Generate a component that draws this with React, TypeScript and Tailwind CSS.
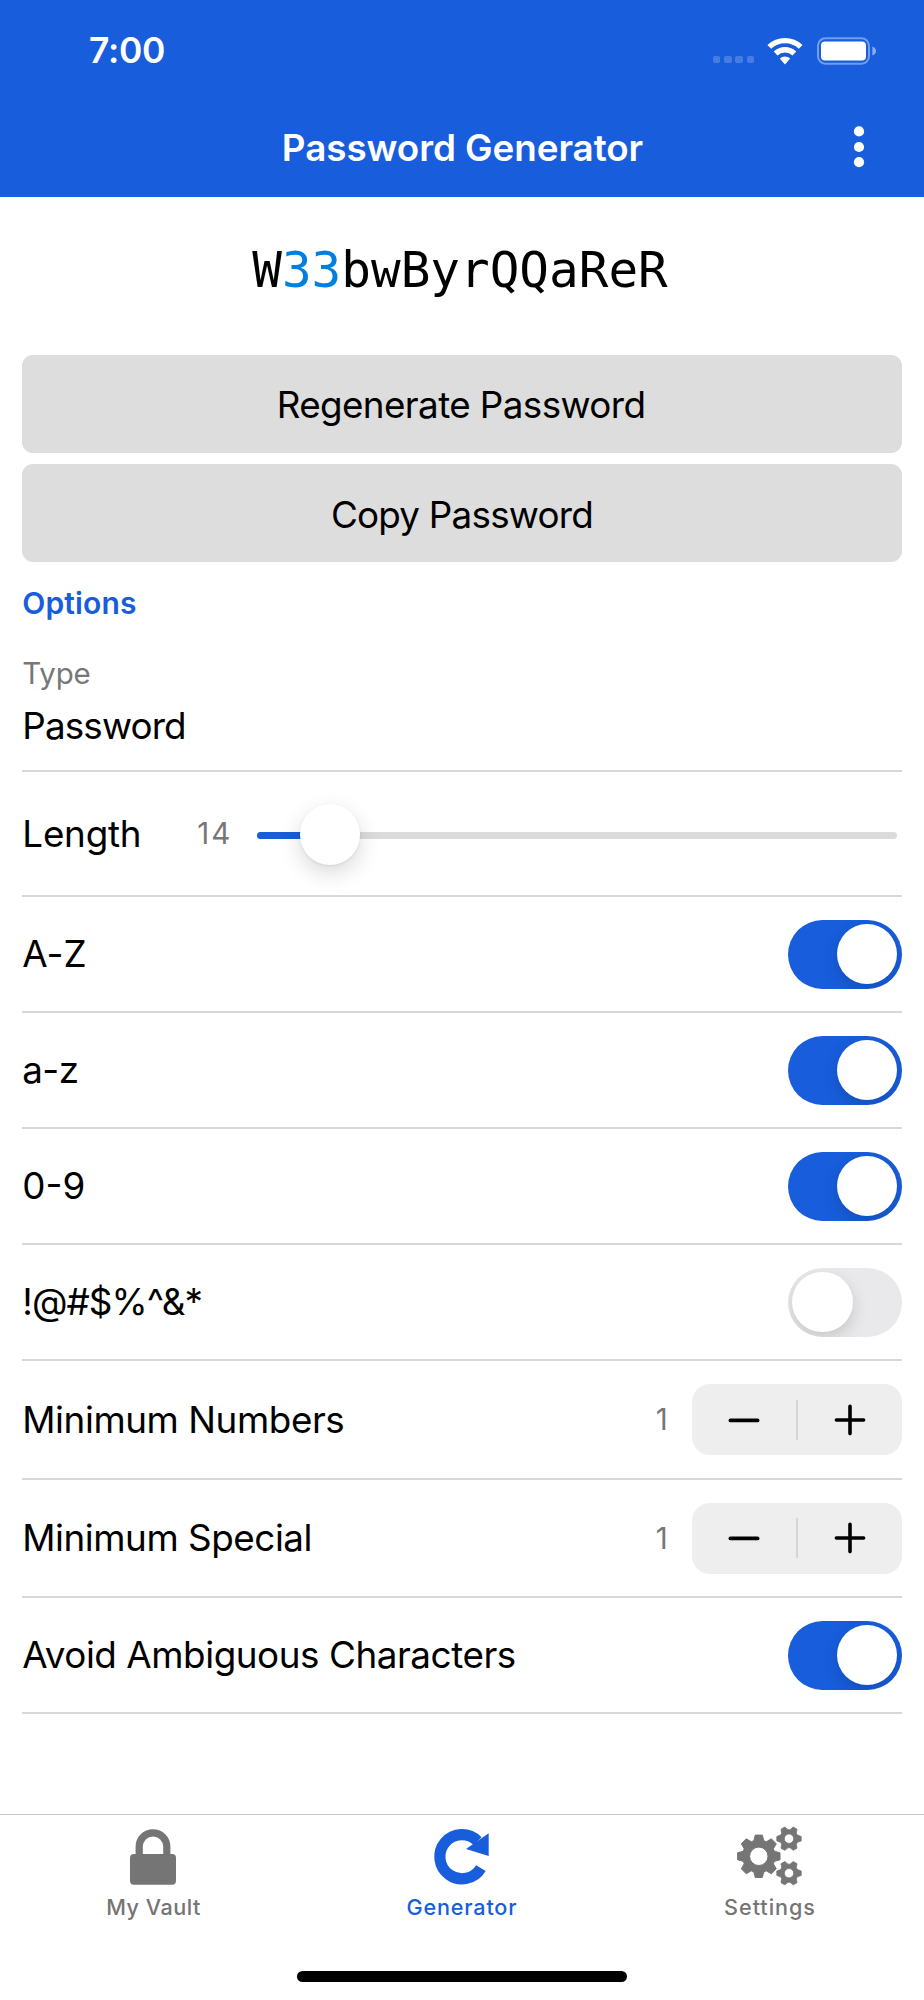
import { useState } from 'react';
import clsx from 'clsx';

const MIN_LENGTH = 5;
const MAX_LENGTH = 128;

type Tab = 'vault' | 'generator' | 'settings';

export default function App() {
  const [password] = useState('W33bwByrQQaReR');
  const [length] = useState(14);
  const [upper, setUpper] = useState(true);
  const [lower, setLower] = useState(true);
  const [digits, setDigits] = useState(true);
  const [special, setSpecial] = useState(false);
  const [minNumbers, setMinNumbers] = useState(1);
  const [minSpecial, setMinSpecial] = useState(1);
  const [avoidAmbiguous, setAvoidAmbiguous] = useState(true);
  const [tab, setTab] = useState<Tab>('generator');

  return (
    <div className="flex h-[2000px] w-[924px] flex-col overflow-hidden bg-white font-['Inter','Liberation_Sans',sans-serif] text-black">
      <header className="h-[197px] shrink-0 bg-[#175DDC] text-white">
        <StatusBar />
        <div className="grid h-24 grid-cols-[1fr_auto_1fr] items-center pb-[3px]">
          <span />
          <h1 className="pl-px text-[36.8px] font-[570] tracking-[-0.06px]">Password Generator</h1>
          <button aria-label="More options" className="mr-[55px] mb-px justify-self-end">
            <svg width="20" height="44" viewBox="0 0 20 44" fill="currentColor" className="block">
              <circle cx="10" cy="6.4" r="5.1" />
              <circle cx="10" cy="22" r="5.1" />
              <circle cx="10" cy="37.2" r="5.1" />
            </svg>
          </button>
        </div>
      </header>

      <main className="flex-1 px-[22.3px]">
        <PasswordText value={password} />

        <div className="flex flex-col gap-[11px]">
          <ActionButton label="Regenerate Password" className="pt-[2px] pr-[2px] tracking-[-0.6px]" />
          <ActionButton label="Copy Password" className="pt-[3px] tracking-[-0.76px]" />
        </div>

        <h2 className="h-[81px] text-[30px] leading-[82px] font-[580] tracking-[0.15px] text-[#175DDC]">Options</h2>

        <div className="h-[129px] border-b-2 border-[#d8d8d8] pt-[12px]">
          <div className="text-[29.5px] leading-[37px] tracking-[-0.2px] text-[#777777]">Type</div>
          <div className="mt-[12px] text-[36.8px] leading-[44px] tracking-[-0.85px]">Password</div>
        </div>

        <div className="flex h-[125px] items-center border-b-2 border-[#d8d8d8]">
          <span className="w-[175px] text-[36.8px] tracking-[-0.22px]">Length</span>
          <span className="w-[60px] text-[29.5px] tracking-[2px] text-[#777777]">{length}</span>
          <LengthSlider value={length} />
        </div>

        <OptionRow label="A-Z" className="tracking-[0.1px]">
          <Toggle on={upper} onChange={setUpper} />
        </OptionRow>
        <OptionRow label="a-z" className="tracking-[-0.6px]">
          <Toggle on={lower} onChange={setLower} />
        </OptionRow>
        <OptionRow label="0-9" className="tracking-normal">
          <Toggle on={digits} onChange={setDigits} />
        </OptionRow>
        <OptionRow label="!@#$%^&*" className="tracking-[-0.95px]">
          <Toggle on={special} onChange={setSpecial} />
        </OptionRow>
        <OptionRow label="Minimum Numbers" className="tracking-[-0.42px]" height="h-[119px]">
          <Stepper value={minNumbers} onChange={setMinNumbers} />
        </OptionRow>
        <OptionRow label="Minimum Special" className="tracking-[-0.45px]" height="h-[118px]">
          <Stepper value={minSpecial} onChange={setMinSpecial} />
        </OptionRow>
        <OptionRow label="Avoid Ambiguous Characters" className="tracking-[-0.44px]">
          <Toggle on={avoidAmbiguous} onChange={setAvoidAmbiguous} />
        </OptionRow>
      </main>

      <footer className="h-[186px] shrink-0 border-t border-[#c6c6c6]">
        <nav className="grid h-[156px] grid-cols-3 items-start pt-[7px]">
          <TabButton label="My Vault" className="mr-px tracking-[0.5px]" active={tab === 'vault'} onClick={() => setTab('vault')}>
            <LockIcon />
          </TabButton>
          <TabButton label="Generator" className="tracking-[0.8px]" active={tab === 'generator'} onClick={() => setTab('generator')}>
            <RefreshIcon />
          </TabButton>
          <TabButton label="Settings" className="tracking-[0.95px]" active={tab === 'settings'} onClick={() => setTab('settings')}>
            <CogsIcon />
          </TabButton>
        </nav>
        <div className="mx-auto h-[11px] w-[330px] rounded-full bg-black" />
      </footer>
    </div>
  );
}

function StatusBar() {
  return (
    <div className="flex h-[101px] items-center pr-[48px] pl-[89px]">
      <span className="text-[35.4px] font-[580] tracking-[-0.28px]">7:00</span>
      <div className="ml-auto flex items-center">
        <div className="mt-[18px] flex gap-[3.8px]">
          {[0, 1, 2, 3].map((i) => (
            <span key={i} className="size-[7.4px] rounded-[2px] bg-white/20" />
          ))}
        </div>
        <svg width="36" height="28" viewBox="0 0 36 28" fill="none" stroke="currentColor" strokeWidth="5.4" className="ml-[13px]">
          <path d="M2.3 9.9A22.8 22.8 0 0 1 33.7 9.9" />
          <path d="M8.6 16.5A13.6 13.6 0 0 1 27.4 16.5" />
          <path d="M18 27.4 12.8 21.6A7.6 7.6 0 0 1 23.2 21.6Z" fill="currentColor" stroke="none" />
        </svg>
        <svg width="59" height="28" viewBox="0 0 59 28" fill="none" className="ml-[14px]">
          <rect x="1" y="1.3" width="51" height="25.4" rx="7.4" stroke="currentColor" strokeOpacity="0.4" strokeWidth="2" />
          <rect x="4" y="4.6" width="45" height="19" rx="4" fill="currentColor" />
          <path d="M55.4 9.4C57.6 10.2 59 12 59 14C59 16 57.6 17.8 55.4 18.6Z" fill="currentColor" fillOpacity="0.5" />
        </svg>
      </div>
    </div>
  );
}

function PasswordText({ value }: { value: string }) {
  return (
    <div className="flex h-[158px] items-center justify-center pr-1 pb-[10px] font-['DejaVu_Sans_Mono','Liberation_Mono',monospace] text-[49.3px]">
      {value.split(/(\d+)/).map((part, i) => (
        <span key={i} className={clsx(/\d/.test(part) && 'text-[#007FDE]')}>
          {part}
        </span>
      ))}
    </div>
  );
}

function ActionButton({ label, className }: { label: string; className?: string }) {
  return <button className={clsx('h-[98px] w-full rounded-[11px] bg-[#dddddd] text-[36.8px]', className)}>{label}</button>;
}

function LengthSlider({ value }: { value: number }) {
  // keep the thumb inside of the track on both ends
  const ratio = (value - MIN_LENGTH) / (MAX_LENGTH - MIN_LENGTH);
  const left = ratio * (639 - 60);

  return (
    <div className="relative mt-[4px] mr-[4.5px] h-[7px] flex-1 rounded-full bg-[#dbdbdb]">
      <div className="h-full rounded-full bg-[#175DDC]" style={{ width: left + 30 }} />
      <div
        className="absolute -top-[28px] size-[60.5px] rounded-full bg-white shadow-[0_8px_22px_rgba(0,0,0,0.15),0_1px_3px_rgba(0,0,0,0.08)]"
        style={{ left }}
      />
    </div>
  );
}

interface OptionRowProps {
  label: string;
  className?: string;
  height?: string;
  children: React.ReactNode;
}

function OptionRow({ label, className, height = 'h-[116px]', children }: OptionRowProps) {
  return (
    <div className={clsx('flex items-center justify-between border-b-2 border-[#d8d8d8]', height)}>
      <span className={clsx('text-[36.8px]', className)}>{label}</span>
      {children}
    </div>
  );
}

function Toggle({ on, onChange }: { on: boolean; onChange: (on: boolean) => void }) {
  return (
    <button
      role="switch"
      aria-checked={on}
      onClick={() => onChange(!on)}
      className={clsx(
        'flex h-[69px] w-[114px] items-center overflow-hidden rounded-full px-[4.4px]',
        on ? 'justify-end bg-[#175DDC]' : 'justify-start bg-[#e9e9eb]',
      )}
    >
      <span className="size-[60.5px] rounded-full bg-white shadow-[0_6px_16px_rgba(0,0,0,0.15)]" />
    </button>
  );
}

function Stepper({ value, onChange }: { value: number; onChange: (value: number) => void }) {
  return (
    <div className="flex items-center">
      <span className="mr-6 text-[29.5px] text-[#777777]">{value}</span>
      <div className="flex h-[71px] w-[210px] items-center rounded-[18px] bg-[#eeeeee]">
        <button aria-label="Decrease" className="flex flex-1 justify-center" onClick={() => onChange(Math.max(0, value - 1))}>
          <svg width="32" height="32" viewBox="0 0 32 32" stroke="currentColor" strokeWidth="3.7" strokeLinecap="round">
            <path d="M2.4 16.4H29.6" />
          </svg>
        </button>
        <div className="h-10 w-[2px] bg-[#d5d5d6]" />
        <button aria-label="Increase" className="flex flex-1 justify-center" onClick={() => onChange(value + 1)}>
          <svg width="32" height="32" viewBox="0 0 32 32" stroke="currentColor" strokeWidth="3.6" strokeLinecap="round">
            <path d="M2.4 16H29.6M16 2.4V29.6" />
          </svg>
        </button>
      </div>
    </div>
  );
}

interface TabButtonProps {
  label: string;
  className?: string;
  active: boolean;
  onClick: () => void;
  children: React.ReactNode;
}

function TabButton({ label, className, active, onClick, children }: TabButtonProps) {
  return (
    <button onClick={onClick} className={clsx('flex flex-col items-center', active ? 'text-[#175DDC]' : 'text-[#757575]')}>
      {children}
      <span className={clsx('text-[21.6px] leading-[34px] font-[460]', className)}>{label}</span>
    </button>
  );
}

function LockIcon() {
  return (
    <svg width="80" height="68" viewBox="0 0 80 68" fill="none">
      <path d="M25.2 34V24.6A13.8 13.8 0 0 1 52.8 24.6V34" stroke="currentColor" strokeWidth="7.2" />
      <rect x="16" y="32" width="46" height="30.7" rx="4" fill="currentColor" />
    </svg>
  );
}

function RefreshIcon() {
  return (
    <svg width="80" height="68" viewBox="0 0 80 68" fill="none">
      <path d="M55.6 19.1A22.1 22.1 0 1 0 58.9 46.1" stroke="currentColor" strokeWidth="11.2" />
      <path d="M66.7 11.3V34L44 27Z" fill="currentColor" />
    </svg>
  );
}

// Outline of a gear with tapered teeth and a round hole
function gearPath(cx: number, cy: number, teeth: number, outer: number, body: number, hole: number, tip: number, base: number) {
  const points: string[] = [];
  for (let i = 0; i < teeth; i++) {
    const a = (i * 2 * Math.PI) / teeth;
    for (const [r, w] of [[body, -base], [outer, -tip], [outer, tip], [body, base]]) {
      const x = cx + r * Math.cos(a) - w * Math.sin(a);
      const y = cy + r * Math.sin(a) + w * Math.cos(a);
      points.push(`${x.toFixed(2)} ${y.toFixed(2)}`);
    }
  }
  return `M${points.join('L')}ZM${cx - hole} ${cy}a${hole} ${hole} 0 1 0 ${hole * 2} 0a${hole} ${hole} 0 1 0 ${-hole * 2} 0Z`;
}

function CogsIcon() {
  return (
    <svg width="80" height="68" viewBox="0 0 80 68" fill="currentColor" stroke="currentColor" strokeLinejoin="round" fillRule="evenodd">
      <path d={gearPath(28.8, 34.3, 8, 21.2, 15.6, 9.2, 3.5, 5)} strokeWidth="1" />
      <path d={gearPath(59, 16.7, 6, 12.2, 8.4, 4.7, 2.2, 3.6)} strokeWidth="0.8" />
      <path d={gearPath(59, 51.2, 6, 12.2, 8.4, 4.7, 2.2, 3.6)} strokeWidth="0.8" />
    </svg>
  );
}
